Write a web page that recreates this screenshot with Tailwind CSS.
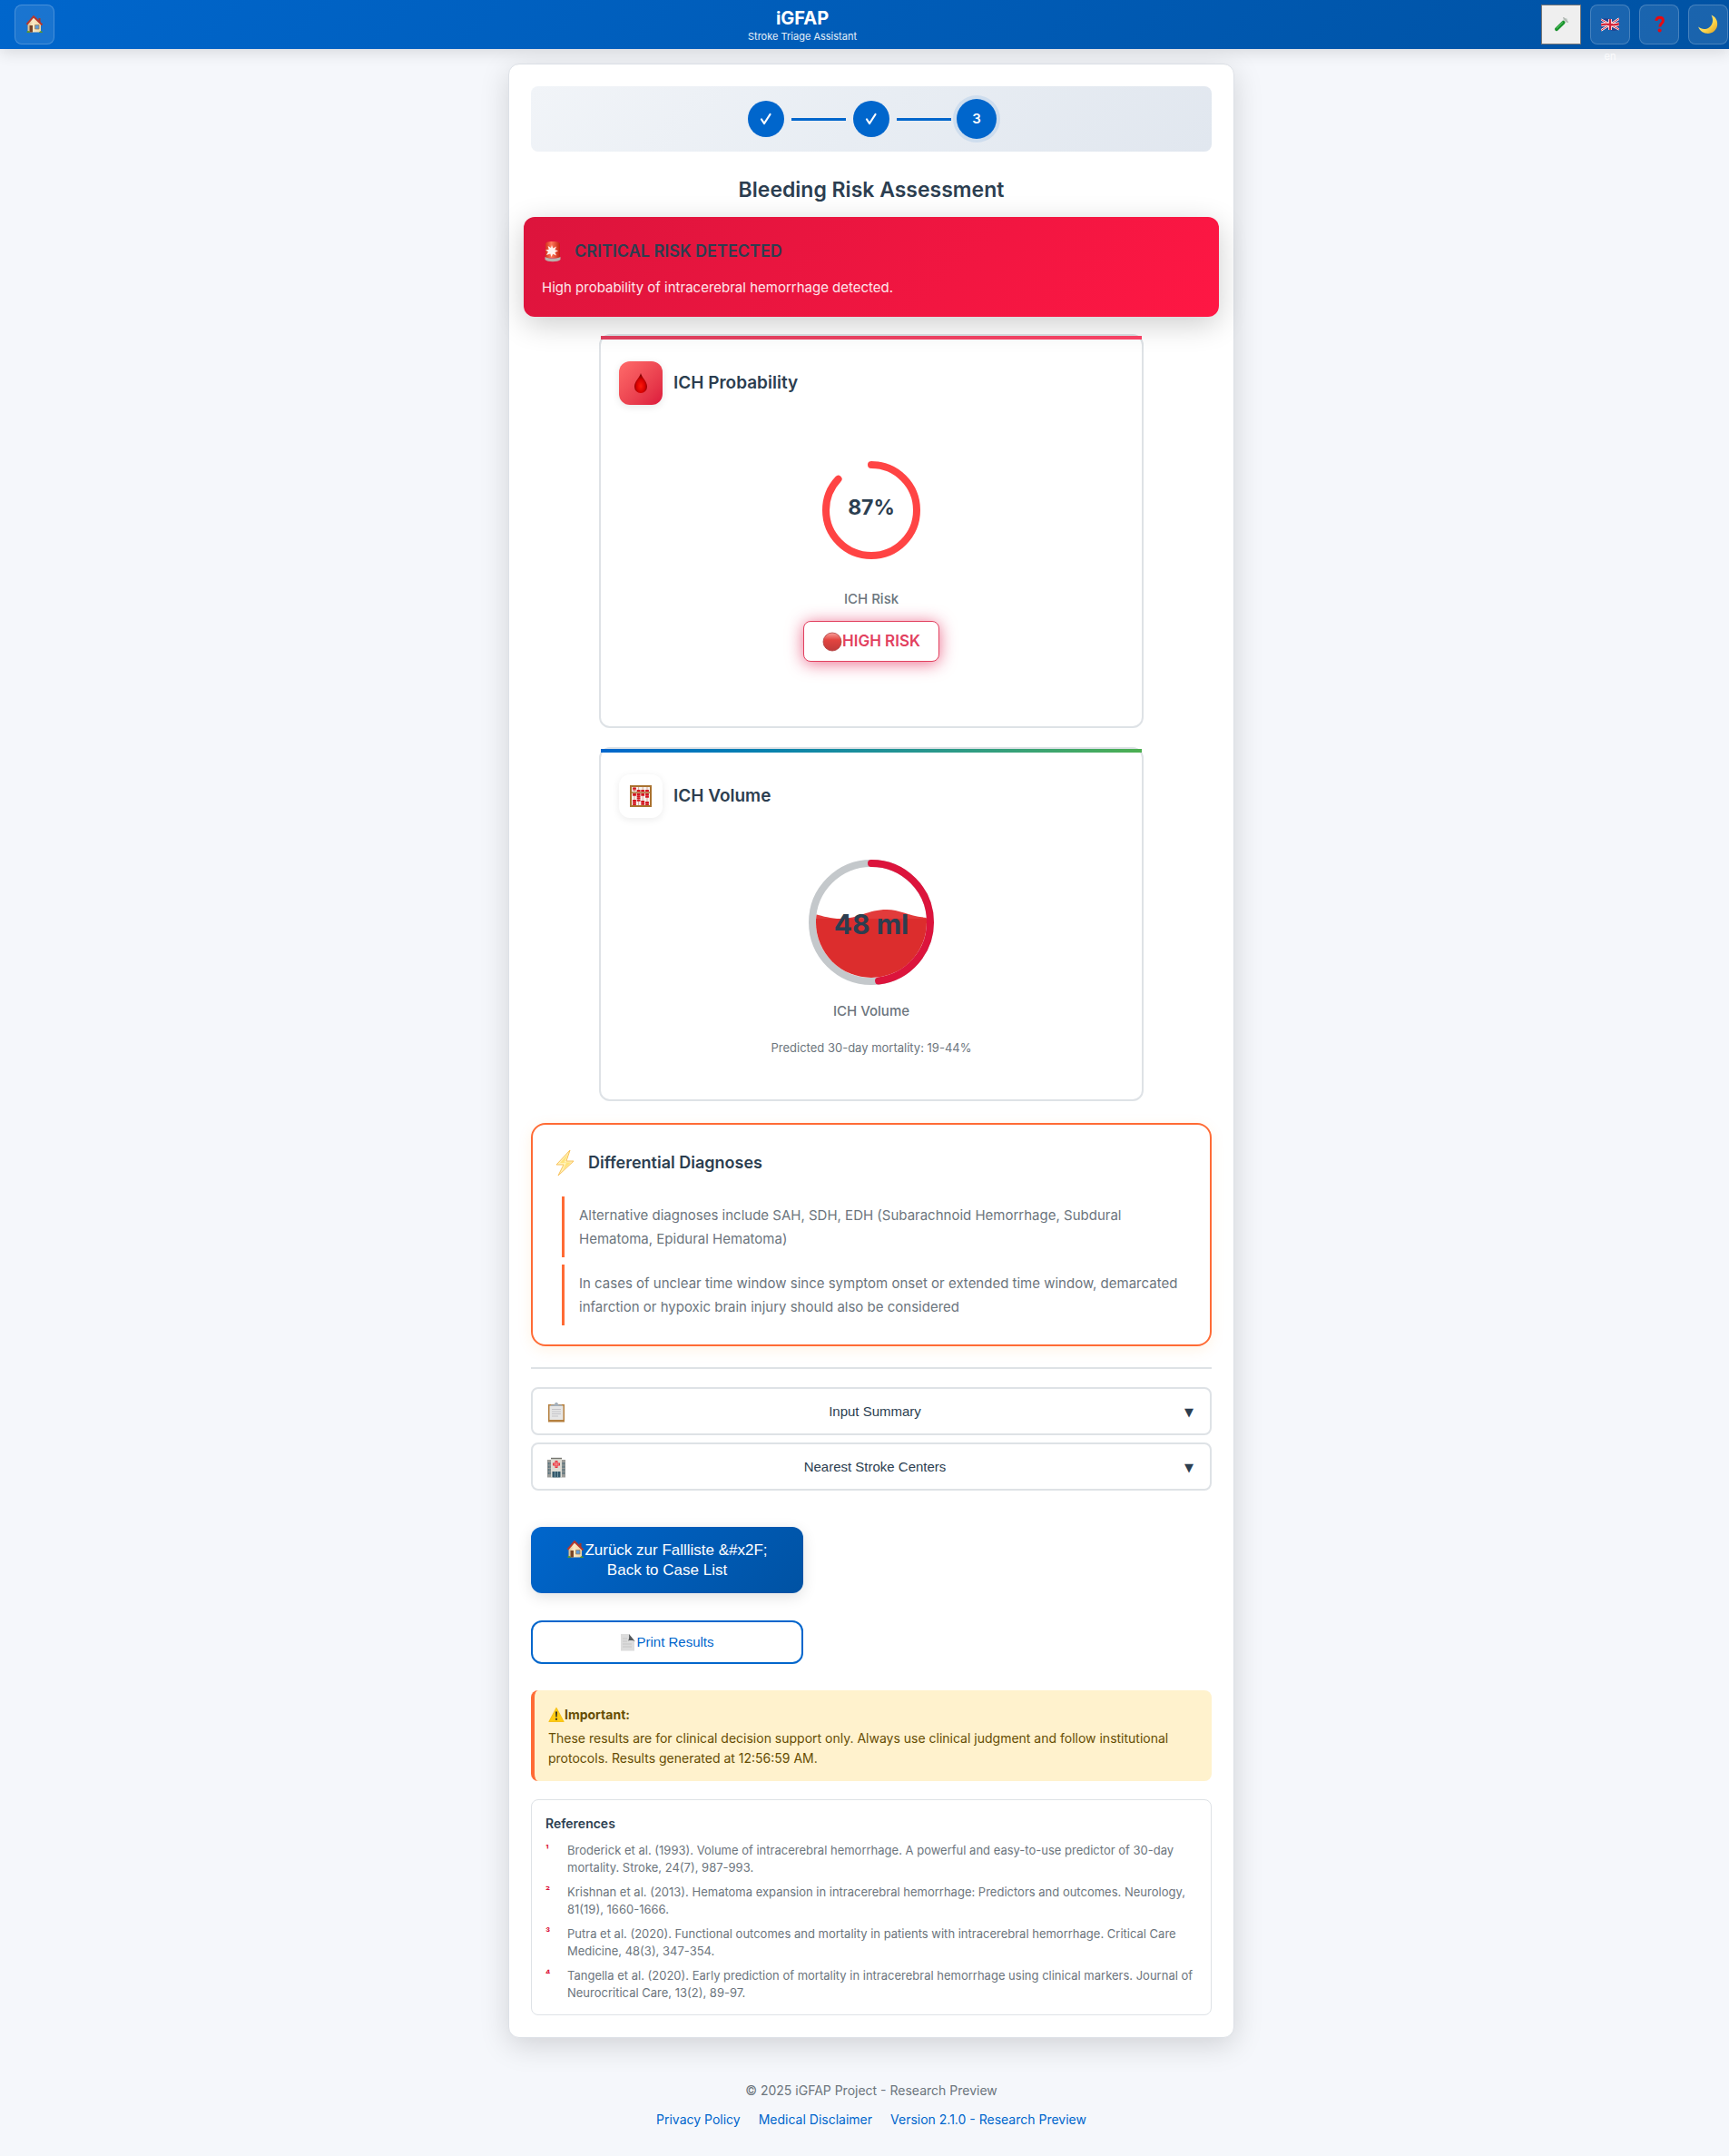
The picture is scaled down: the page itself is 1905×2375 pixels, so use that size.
<!DOCTYPE html>
<html lang="en">
<head>
<meta charset="utf-8">
<title>iGFAP - Stroke Triage Assistant</title>
<script src="https://cdn.jsdelivr.net/npm/@tailwindcss/browser@4"></script>
</head>
<body class="min-h-screen bg-[#f5f7fb] font-['Inter',sans-serif] text-[#2c3e50]">

<svg class="absolute size-0" aria-hidden="true">
  <defs>
    <linearGradient id="wallG" x1="0" y1="0" x2="1" y2="0"><stop offset="0" stop-color="#d9b98c"/><stop offset=".4" stop-color="#fbe9c4"/><stop offset="1" stop-color="#ecd3a4"/></linearGradient>
    <linearGradient id="moonG" x1="0" y1="0" x2="1" y2="1"><stop offset="0" stop-color="#fff09a"/><stop offset=".6" stop-color="#fcd54c"/><stop offset="1" stop-color="#d99a1c"/></linearGradient>
    <radialGradient id="dropG" cx=".5" cy=".65" r=".55"><stop offset="0" stop-color="#ff1a0a"/><stop offset=".6" stop-color="#d80000"/><stop offset="1" stop-color="#7d0000"/></radialGradient>
    <linearGradient id="ballG" x1="0" y1="0" x2="0" y2="1"><stop offset="0" stop-color="#f9a09a"/><stop offset=".4" stop-color="#e2443f"/><stop offset="1" stop-color="#c03a3a"/></linearGradient>
    <linearGradient id="sirenG" x1="0" y1="0" x2="1" y2="0"><stop offset="0" stop-color="#d4311d"/><stop offset=".4" stop-color="#ff7a5a"/><stop offset="1" stop-color="#c51f10"/></linearGradient>
    <symbol id="house" viewBox="0 0 20 20">
      <path d="M14.500 3h2v5h-2z" fill="#a03a2c"/>
      <path d="M2.500 9 9 2.500 17 9.500V18.500H2.500z" fill="url(#wallG)"/>
      <path d="M1.500 9.800 9 1.200 18.500 10.500" fill="none" stroke="#b8362b" stroke-width="2"/>
      <path d="M4.500 11h3.500v7.500H4.500z" fill="#7a4526"/>
      <path d="M10.500 10.500h4.500v4.500h-4.500z" fill="#5d9bd6" stroke="#a77b4a" stroke-width=".7"/>
      <path d="M1.500 19c0-2 1.500-2.500 2.500-1.500h1V19zM15 19c.5-2.500 3.500-2.500 4 0z" fill="#57962f"/>
    </symbol>
  </defs>
</svg>

<header class="relative z-20 flex h-[54px] items-center bg-linear-135 from-[#0066cc] to-[#0052a3] pl-4 pr-px shadow-[0_4px_16px_rgba(0,0,0,0.12)]">
  <button type="button" aria-label="Home" class="grid size-11 place-items-center rounded-lg border border-white/20 bg-white/10"><svg class="size-5"><use href="#house"/></svg></button>
  <div class="flex-1 pl-2.5 text-center text-white">
    <h1 class="pt-px text-xl leading-6 font-bold">iGFAP</h1>
    <p class="text-[11px] leading-4 text-white/90">Stroke Triage Assistant</p>
  </div>
  <div class="flex gap-2.5">
    <button type="button" aria-label="Load test data" class="grid size-11 place-items-center border border-[#767676] bg-[#efefef]">
      <svg class="size-5" viewBox="0 0 20 20"><path d="M15 5 5 15.200" stroke="#c9d4cc" stroke-width="4.400" stroke-linecap="round"/><path d="M12.500 7.800 5 15.200" stroke="#17932a" stroke-width="3.800" stroke-linecap="round"/><path d="M12 7.500 5 14.300" stroke="#6ad077" stroke-width="1"/><path d="m12.800 2.800 4.400 4.400" stroke="#aeb5b0" stroke-width="1.600" stroke-linecap="round"/></svg>
    </button>
    <button type="button" aria-label="Language" class="relative grid size-11 place-items-center rounded-lg border border-white/20 bg-white/10">
      <svg class="h-4 w-5" viewBox="0 0 20 16"><path d="M0 2.500C4 .5 7 1 10 2s6 1 10-.8v12.300C16 15.500 13 15 10 14S4 13 0 14.800z" fill="#26428f"/><path d="m0 2.500 20 11M20 1.500 0 14.500" stroke="#fff" stroke-width="2.400"/><path d="m0 2.500 20 11M20 1.500 0 14.500" stroke="#d32338" stroke-width="1"/><path d="M10 2v12M0 8.500c4-1.500 7-1 10-.5s6 .8 10-.8" fill="none" stroke="#fff" stroke-width="4"/><path d="M10 2v12M0 8.500c4-1.500 7-1 10-.5s6 .8 10-.8" fill="none" stroke="#d32338" stroke-width="2.400"/></svg>
      <span class="absolute top-12 left-0 w-full text-center text-[11px] leading-4 text-white/80">en</span>
    </button>
    <button type="button" aria-label="Help" class="grid size-11 place-items-center rounded-lg border border-white/20 bg-white/10">
      <svg class="size-5" viewBox="0 0 20 20"><path d="M6.800 5.800c.3-2.600 2-3.600 3.800-3.600 2.200 0 3.800 1.200 3.800 3.500 0 3-3.600 3.200-3.600 6.800" fill="none" stroke="#e60a12" stroke-width="3"/><circle cx="10.600" cy="16.500" r="2" fill="#e60a12"/></svg>
    </button>
    <button type="button" aria-label="Dark mode" class="grid size-11 place-items-center rounded-lg border border-white/20 bg-white/10">
      <svg class="size-6" viewBox="0 0 24 24"><path d="M15.500 1.500c5 2 7.500 7 6.500 12-1.300 6-6.500 9-11.800 8.300C5.500 21.200 2.500 18.500 1.200 14.600c3.300 2.800 8 3.300 11.600.9 4.600-3 5.400-9 2.700-14z" fill="url(#moonG)"/></svg>
    </button>
  </div>
</header>

<div class="pl-[15px]">
<main class="mx-auto mt-4 max-w-[800px] rounded-xl border border-[#dde1e7] bg-white p-6 shadow-[0_8px_32px_rgba(0,0,0,0.15)]">

  <ol aria-label="Progress" class="flex h-[72px] items-center justify-center gap-2 rounded-lg bg-linear-135 from-[#f1f4f8] via-[#e8edf3] to-[#e1e7ef]">
    <li class="grid size-10 place-items-center rounded-full bg-[#0066cc]"><svg class="size-4" viewBox="0 0 16 16"><path d="m3 8.500 3 4.500L12.500 3" fill="none" stroke="#fff" stroke-width="2.200" stroke-linecap="round" stroke-linejoin="round"/></svg></li>
    <li aria-hidden="true" class="h-[3px] w-[60px] bg-[#0066cc]"></li>
    <li class="grid size-10 place-items-center rounded-full bg-[#0066cc]"><svg class="size-4" viewBox="0 0 16 16"><path d="m3 8.500 3 4.500L12.500 3" fill="none" stroke="#fff" stroke-width="2.200" stroke-linecap="round" stroke-linejoin="round"/></svg></li>
    <li aria-hidden="true" class="h-[3px] w-[60px] bg-[#0066cc]"></li>
    <li aria-current="step" class="-mx-0.5 grid size-11 place-items-center rounded-full bg-[#0066cc] text-[15px] font-semibold text-white ring-4 ring-[#0066cc]/10">3</li>
  </ol>

  <h2 class="mt-[26px] mb-3.5 text-center text-[23px] leading-8 font-semibold">Bleeding Risk Assessment</h2>

  <section class="relative z-10 -mx-2 rounded-xl bg-linear-135 from-[#dc143c] to-[#ff1744] px-5 pt-6 pb-5 shadow-[0_8px_32px_rgba(0,0,0,0.2)]">
    <div class="flex h-7 items-center gap-3">
      <svg class="size-6" viewBox="0 0 24 24"><path d="M4 4c0-2 2-3 8-3s8 1 8 3v15H4z" fill="url(#sirenG)"/><path d="M3.500 18c4 2 13 2 17 0v3c-3 3-14 3-17 0z" fill="#b9b2ab"/><path d="m11 5 1.400 3.600L16 6.500l-1.600 3.800 3.600 1-3.600 1.700 1.600 3.500-3.800-1.700L10.500 18l-1.200-3.500L5 16l2-3.700-3-1.800 3.700-.8-1-3.700 3.300 2z" fill="#fff1ec"/></svg>
      <h3 class="text-lg font-semibold text-[#2c3e50]">CRITICAL RISK DETECTED</h3>
    </div>
    <p class="mt-3.5 text-[15px] leading-6 text-white/90">High probability of intracerebral hemorrhage detected.</p>
  </section>

  <div class="mx-auto mt-[19px] flex max-w-[600px] flex-col gap-[21px]">
    <section class="relative flex flex-col items-center rounded-xl border-2 border-[#dee2e6] px-5 pt-7 pb-[71px]">
      <div class="absolute inset-x-0 top-0 h-1 bg-linear-to-r from-[#e2405f] to-[#ff4569]"></div>
      <div class="flex items-center gap-3 self-stretch">
        <div class="grid size-12 place-items-center rounded-xl bg-linear-135 from-[#ff6b6b] to-[#dc143c] shadow-[0_2px_8px_rgba(0,0,0,0.1)]"><svg class="size-6" viewBox="0 0 24 24"><path d="M12 1c1 4.500 7 9 7 15a7 7 0 0 1-14 0C5 10 11 5.500 12 1z" fill="url(#dropG)"/></svg></div>
        <h3 class="text-[19px] leading-6 font-semibold">ICH Probability</h3>
      </div>
      <div class="relative mt-14 size-[120px]">
        <svg class="size-full -rotate-90" viewBox="0 0 120 120"><circle cx="60" cy="60" r="50" fill="none" stroke="#ff4444" stroke-width="8" stroke-linecap="round" pathLength="100" stroke-dasharray="87 100"/></svg>
        <div class="absolute inset-0 flex items-center justify-center pb-1.5 text-[23px] font-bold">87%</div>
      </div>
      <p class="mt-7 text-[15px] leading-5 font-medium text-[#6c757d]">ICH Risk</p>
      <div class="mt-3.5 flex h-[45px] w-[150px] items-center justify-center rounded-lg border border-[#e2405f] bg-white text-[17px] font-semibold text-[#e2405f] shadow-[0_2px_18px_rgba(226,30,80,0.65)]">
        <svg class="size-[22px]" viewBox="0 0 22 22"><circle cx="11" cy="11" r="10" fill="url(#ballG)" stroke="#b04040" stroke-width=".8"/></svg>HIGH RISK
      </div>
    </section>

    <section class="relative flex flex-col items-center rounded-xl border-2 border-[#dee2e6] px-5 pt-7 pb-[47px]">
      <div class="absolute inset-x-0 top-0 h-1 bg-linear-to-r from-[#0066cc] to-[#4caf50]"></div>
      <div class="flex items-center gap-3 self-stretch">
        <div class="grid size-12 place-items-center rounded-xl bg-white shadow-[0_2px_8px_rgba(0,0,0,0.08)]">
          <svg class="size-6" viewBox="0 0 24 24"><path d="M1 1h22v22H1z" fill="#f7f2ee" stroke="#a9722f" stroke-width="2"/><path d="M2 8h20" stroke="#a9722f" stroke-width="1.500"/><path d="M5 2v20M9.600 2v20M14.200 2v20M19 2v20" stroke="#c98a7a" stroke-width=".7"/><path d="M5 2.500v3M9.600 5v2.500M14.200 5v2.500M19 5v2.500M5 9v3m0 4v6M9.600 9v9M14.200 9v3m0 5v5M19 9v5m0 4v4" stroke="#d3151f" stroke-width="3.800" stroke-dasharray="1.900 .4"/></svg>
        </div>
        <h3 class="text-[19px] leading-6 font-semibold">ICH Volume</h3>
      </div>
      <div class="relative mt-[45px] size-[140px]">
        <svg class="size-full" viewBox="0 0 140 140">
          <clipPath id="vol"><circle cx="70" cy="70" r="61"/></clipPath>
          <circle cx="70" cy="70" r="65" fill="none" stroke="#c4c8cb" stroke-width="8"/>
          <g clip-path="url(#vol)"><path d="M8 61c8 2 17 5 28 5 20 0 30-10 51-10 15 0 25 8 46 9v5H8z" fill="#e23b3b"/><path d="M8 66h124v70H8z" fill="#dc2d2d"/></g>
          <circle cx="70" cy="70" r="65" fill="none" stroke="#dc143c" stroke-width="8" stroke-linecap="round" pathLength="100" stroke-dasharray="48 100" transform="rotate(-90 70 70)"/>
        </svg>
        <div class="absolute inset-0 flex items-center justify-center pt-1 text-[30px] font-bold">48 ml</div>
      </div>
      <p class="mt-[18px] text-[15px] leading-5 font-medium text-[#6c757d]">ICH Volume</p>
      <p class="mt-5 text-[13px] leading-5 text-[#6c757d]">Predicted 30-day mortality: 19-44%</p>
    </section>
  </div>

  <section class="mt-6 rounded-2xl border-2 border-[#ff6b35] px-6 pt-[26px] pb-[21px] shadow-[0_4px_16px_rgba(255,152,0,0.1)]">
    <div class="flex h-8 items-center gap-3">
      <svg class="h-8 w-[25px]" viewBox="0 0 25 32"><path d="M17 2 2 18h8L4 30 21 14h-8z" fill="#fff3b8" stroke="#f8c05a" stroke-width="1" stroke-linejoin="round"/><path d="M15 6 6 16h7l-4 8L18 15.500h-7.500z" fill="#ffe27a"/></svg>
      <h3 class="text-lg font-semibold">Differential Diagnoses</h3>
    </div>
    <ul class="mt-[21px] ml-2 flex flex-col gap-2 text-[15px] leading-[26px] text-[#6c757d]">
      <li class="border-l-3 border-[#ff6b35] pt-2 pr-2 pb-[7px] pl-4">Alternative diagnoses include SAH, SDH, EDH (Subarachnoid Hemorrhage, Subdural Hematoma, Epidural Hematoma)</li>
      <li class="border-l-3 border-[#ff6b35] pt-2 pr-2 pb-[7px] pl-4">In cases of unclear time window since symptom onset or extended time window, demarcated infarction or hypoxic brain injury should also be considered</li>
    </ul>
  </section>

  <hr class="mt-[23px] mb-5 border-t-2 border-[#dee2e6]">

  <div class="flex flex-col gap-2 font-['Liberation_Sans',sans-serif] text-[15px]">
    <button type="button" aria-expanded="false" class="flex h-[53px] items-center justify-between rounded-lg border-2 border-[#dee2e6] pt-0.5 pr-[18px] pl-4">
      <svg class="h-6 w-5" viewBox="0 0 20 24"><path d="M1 3h18v19.500H1z" fill="#b5803f"/><path d="M2.500 4.500h15v15.500h-15z" fill="#e6e6e6"/><path d="M5 8.500h10M5 11h10M5 13.500h10M5 16h7" stroke="#c4c4c8" stroke-width="1"/><path d="M4 3.500h12v1.500H4zM7.500 3.500 9 1h2l1.500 2.500z" fill="#a5b0bb"/></svg>
      <span>Input Summary</span>
      <span class="font-['DejaVu_Sans'] text-[13px]">▼</span>
    </button>
    <button type="button" aria-expanded="false" class="flex h-[53px] items-center justify-between rounded-lg border-2 border-[#dee2e6] pt-0.5 pr-[18px] pl-4">
      <svg class="h-6 w-5" viewBox="0 0 20 24"><path d="M0 3h5v19.500H0zM15 3h5v19.500h-5z" fill="#9b9c99"/><path d="M4 1.500h12v21H4z" fill="#dddcd4"/><path d="M4 .8h12v1.400H4z" fill="#74746f"/><path d="M1.300 6v14M3 6v14M17 6v14M18.700 6v14" stroke="#4d6c78" stroke-width="1" stroke-dasharray="2.500 1"/><path d="M10 4v8M6 8h8" stroke="#e8323c" stroke-width="3"/><path d="M10 5v6M7 8h6" stroke="#f9b0b0" stroke-width=".8"/><path d="M5.500 16h9v6.500h-9z" fill="#34596b"/><path d="M8.500 16v6.500M11.500 16v6.500" stroke="#8fb0bd" stroke-width=".7"/></svg>
      <span>Nearest Stroke Centers</span>
      <span class="font-['DejaVu_Sans'] text-[13px]">▼</span>
    </button>
  </div>

  <div class="mt-10 flex max-w-[300px] flex-col gap-[30px] font-['Liberation_Sans',sans-serif]">
    <button type="button" class="h-[73px] rounded-xl bg-linear-135 from-[#0066cc] to-[#0052a3] px-8 text-[17px] leading-[22px] text-white shadow-[0_4px_16px_rgba(0,0,0,0.12)]"><svg class="inline size-5 align-[-4px]"><use href="#house"/></svg>Zurück zur Fallliste &amp;#x2F; Back to Case List</button>
    <button type="button" class="flex h-12 items-center justify-center rounded-xl border-2 border-[#0066cc] text-[15px] text-[#0066cc]">
      <svg class="h-5 w-[18px]" viewBox="0 0 18 20"><path d="M1 1h9l6 7v11.500H1z" fill="#dcdcdc"/><path d="M10 1c.5 4 0 6-1 7.500 3-.8 6-.5 8 1z" fill="#55585b"/><path d="M3 6h5M3 9h5M3 12h10M3 15h10" stroke="#c6c6c6"/></svg>Print Results
    </button>
  </div>

  <section class="mt-[29px] rounded-lg border-l-4 border-[#ff6b35] bg-[#fff2cd] px-[15px] pt-4 pb-3.5 text-sm leading-[22px] text-[#664d03]">
    <strong class="flex items-center font-bold"><svg class="size-[18px]" viewBox="0 0 18 18"><path d="M9 1.500 17 16.500H1z" fill="#ffcc12" stroke="#f6c21a" stroke-width="1.200" stroke-linejoin="round"/><path d="M8 5.500h2l-.4 6H8.400z" fill="#222"/><circle cx="9" cy="13.800" r="1.100" fill="#222"/></svg>Important:</strong>
    <p class="mt-1">These results are for clinical decision support only. Always use clinical judgment and follow institutional protocols. Results generated at 12:56:59 AM.</p>
  </section>

  <section class="mt-5 rounded-lg border border-[#dee2e6] px-[15px] pt-4 pb-3.5">
    <h4 class="text-sm leading-5 font-semibold">References</h4>
    <ol class="mt-2.5 flex flex-col gap-2 text-[13px] leading-[19px] text-[#6c757d]">
      <li class="flex"><span class="w-6 shrink-0 text-[11px] leading-4 font-bold text-[#dc143c]">¹</span><span>Broderick et al. (1993). Volume of intracerebral hemorrhage. A powerful and easy-to-use predictor of 30-day mortality. Stroke, 24(7), 987-993.</span></li>
      <li class="flex"><span class="w-6 shrink-0 text-[11px] leading-4 font-bold text-[#dc143c]">²</span><span>Krishnan et al. (2013). Hematoma expansion in intracerebral hemorrhage: Predictors and outcomes. Neurology, 81(19), 1660-1666.</span></li>
      <li class="flex"><span class="w-6 shrink-0 text-[11px] leading-4 font-bold text-[#dc143c]">³</span><span>Putra et al. (2020). Functional outcomes and mortality in patients with intracerebral hemorrhage. Critical Care Medicine, 48(3), 347-354.</span></li>
      <li class="flex"><span class="w-6 shrink-0 text-[11px] leading-4 font-bold text-[#dc143c]">⁴</span><span>Tangella et al. (2020). Early prediction of mortality in intracerebral hemorrhage using clinical markers. Journal of Neurocritical Care, 13(2), 89-97.</span></li>
    </ol>
  </section>
</main>

<footer class="mt-12 pb-7 text-center text-sm leading-5">
  <p class="text-[#6c757d]">© 2025 iGFAP Project - Research Preview</p>
  <nav class="mt-3 flex justify-center gap-5 text-[#0066cc]">
    <a href="#privacy">Privacy Policy</a>
    <a href="#disclaimer">Medical Disclaimer</a>
    <a href="#version">Version 2.1.0 - Research Preview</a>
  </nav>
</footer>
</div>
</body>
</html>
